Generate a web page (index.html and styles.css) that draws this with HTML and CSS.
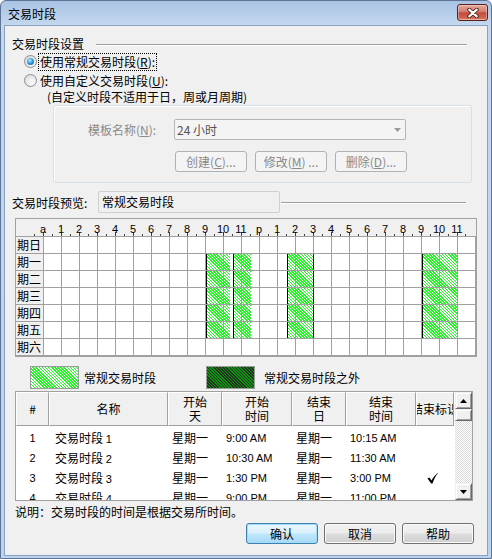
FILE: index.html
```html
<!DOCTYPE html>
<html lang="zh-CN">
<head>
<meta charset="utf-8">
<title>交易时段</title>
<link rel="stylesheet" href="styles.css">
</head>
<body>
<div class="window">
  <div class="titlebar">
    <span class="title">交易时段</span>
    <span class="close"><svg width="12" height="10" viewBox="0 0 12 10"><path d="M2.2 1.6L9.8 8.4M9.8 1.6L2.2 8.4" stroke="#4b1912" stroke-width="3.8" stroke-linecap="round" fill="none"/><path d="M2.2 1.6L9.8 8.4M9.8 1.6L2.2 8.4" stroke="#fff" stroke-width="2.1" stroke-linecap="round" fill="none"/></svg></span>
  </div>
  <div class="client">
    <div class="sect-head"><span>交易时段设置</span><i class="rule"></i></div>
    <div class="opt"><span class="radio on"></span><span class="opt-label focus">使用常规交易时段(<u>R</u>):</span></div>
    <div class="opt"><span class="radio"></span><span class="opt-label">使用自定义交易时段(<u>U</u>):</span></div>
    <div class="note">(自定义时段不适用于日，周或月周期)</div>
    <div class="groupbox">
      <div class="gb-row">
        <span class="gb-label">模板名称(<u>N</u>):</span>
        <div class="combo"><span>24 小时</span><svg width="7" height="4" viewBox="0 0 7 4"><path d="M0 0H7L3.5 4Z" fill="#9a9a9a"/></svg></div>
      </div>
      <div class="gb-btns">
        <button class="btn-dis">创建(<u>C</u>)...</button>
        <button class="btn-dis">修改(<u>M</u>) ...</button>
        <button class="btn-dis">删除(<u>D</u>)...</button>
      </div>
    </div>
    <div class="prev">
      <span class="prev-label">交易时段预览:</span>
      <div class="tb">常规交易时段</div>
      <i class="rule"></i>
    </div>
    <div class="chart">
      <div class="hours"><span>a</span><span>1</span><span>2</span><span>3</span><span>4</span><span>5</span><span>6</span><span>7</span><span>8</span><span>9</span><span>10</span><span>11</span><span>p</span><span>1</span><span>2</span><span>3</span><span>4</span><span>5</span><span>6</span><span>7</span><span>8</span><span>9</span><span>10</span><span>11</span></div>
      <div class="drow"><span class="day">期日</span><i></i><i></i><i></i><i></i><i></i><i></i><i></i><i></i><i></i><i></i><i></i><i></i><i></i><i></i><i></i><i></i><i></i><i></i><i></i><i></i><i></i><i></i><i></i><i></i></div>
      <div class="drow"><span class="day">期一</span><i></i><i></i><i></i><i></i><i></i><i></i><i></i><i></i><i></i><i></i><i></i><i></i><i></i><i></i><i></i><i></i><i></i><i></i><i></i><i></i><i></i><i></i><i></i><i></i><b class="sess" style="left:190px;width:24px"></b><b class="sess" style="left:217px;width:18px"></b><b class="sess" style="left:271px;width:26px"></b><b class="edge" style="left:297px"></b><b class="sess" style="left:406px;width:35px"></b></div>
      <div class="drow"><span class="day">期二</span><i></i><i></i><i></i><i></i><i></i><i></i><i></i><i></i><i></i><i></i><i></i><i></i><i></i><i></i><i></i><i></i><i></i><i></i><i></i><i></i><i></i><i></i><i></i><i></i><b class="sess" style="left:190px;width:24px"></b><b class="sess" style="left:217px;width:18px"></b><b class="sess" style="left:271px;width:26px"></b><b class="edge" style="left:297px"></b><b class="sess" style="left:406px;width:35px"></b></div>
      <div class="drow"><span class="day">期三</span><i></i><i></i><i></i><i></i><i></i><i></i><i></i><i></i><i></i><i></i><i></i><i></i><i></i><i></i><i></i><i></i><i></i><i></i><i></i><i></i><i></i><i></i><i></i><i></i><b class="sess" style="left:190px;width:24px"></b><b class="sess" style="left:217px;width:18px"></b><b class="sess" style="left:271px;width:26px"></b><b class="edge" style="left:297px"></b><b class="sess" style="left:406px;width:35px"></b></div>
      <div class="drow"><span class="day">期四</span><i></i><i></i><i></i><i></i><i></i><i></i><i></i><i></i><i></i><i></i><i></i><i></i><i></i><i></i><i></i><i></i><i></i><i></i><i></i><i></i><i></i><i></i><i></i><i></i><b class="sess" style="left:190px;width:24px"></b><b class="sess" style="left:217px;width:18px"></b><b class="sess" style="left:271px;width:26px"></b><b class="edge" style="left:297px"></b><b class="sess" style="left:406px;width:35px"></b></div>
      <div class="drow"><span class="day">期五</span><i></i><i></i><i></i><i></i><i></i><i></i><i></i><i></i><i></i><i></i><i></i><i></i><i></i><i></i><i></i><i></i><i></i><i></i><i></i><i></i><i></i><i></i><i></i><i></i><b class="sess" style="left:190px;width:24px"></b><b class="sess" style="left:217px;width:18px"></b><b class="sess" style="left:271px;width:26px"></b><b class="edge" style="left:297px"></b><b class="sess" style="left:406px;width:35px"></b></div>
      <div class="drow last"><span class="day">期六</span><i></i><i></i><i></i><i></i><i></i><i></i><i></i><i></i><i></i><i></i><i></i><i></i><i></i><i></i><i></i><i></i><i></i><i></i><i></i><i></i><i></i><i></i><i></i><i></i></div>
    </div>
    <div class="legend">
      <span class="swatch hatch"></span><span class="lg1">常规交易时段</span>
      <span class="swatch hatch-dark"></span><span class="lg2">常规交易时段之外</span>
    </div>
    <div class="list">
      <div class="list-main">
        <div class="lhead">
          <div class="c1">#</div>
          <div class="c2">名称</div>
          <div class="c3">开始<br>天</div>
          <div class="c4">开始<br>时间</div>
          <div class="c5">结束<br>日</div>
          <div class="c6">结束<br>时间</div>
          <div class="c7">结束标识</div>
        </div>
        <div class="lrows">
          <div class="lr"><div class="c1 t">1</div><div class="c2">交易时段 <span class="t">1</span></div><div class="c3">星期一</div><div class="c4 t">9:00 AM</div><div class="c5">星期一</div><div class="c6 t">10:15 AM</div><div class="c7"></div></div>
          <div class="lr"><div class="c1 t">2</div><div class="c2">交易时段 <span class="t">2</span></div><div class="c3">星期一</div><div class="c4 t">10:30 AM</div><div class="c5">星期一</div><div class="c6 t">11:30 AM</div><div class="c7"></div></div>
          <div class="lr"><div class="c1 t">3</div><div class="c2">交易时段 <span class="t">3</span></div><div class="c3">星期一</div><div class="c4 t">1:30 PM</div><div class="c5">星期一</div><div class="c6 t">3:00 PM</div><div class="c7"><svg width="12" height="12" viewBox="0 0 12 12"><path d="M0.5 6.6L2.4 5.6L4.5 8.4C6.4 5 8.6 2.4 11.6 0.4C8.9 3.4 6.9 7 5.5 11.6H4.2Z" fill="#000"/></svg></div></div>
          <div class="lr"><div class="c1 t">4</div><div class="c2">交易时段 <span class="t">4</span></div><div class="c3">星期一</div><div class="c4 t">9:00 PM</div><div class="c5">星期一</div><div class="c6 t">11:00 PM</div><div class="c7"></div></div>
        </div>
      </div>
      <div class="vscroll">
        <div class="sb-btn"><svg width="7" height="4" viewBox="0 0 7 4"><path d="M3.5 0L7 4H0Z" fill="#000"/></svg></div>
        <div class="sb-thumb"></div>
        <div class="sb-track"></div>
        <div class="sb-btn"><svg width="7" height="4" viewBox="0 0 7 4"><path d="M0 0H7L3.5 4Z" fill="#000"/></svg></div>
      </div>
    </div>
    <div class="foot">说明：交易时段的时间是根据交易所时间。</div>
    <div class="actions">
      <button class="btn default">确认</button>
      <button class="btn">取消</button>
      <button class="btn">帮助</button>
    </div>
  </div>
</div>
</body>
</html>
```

FILE: styles.css
```css
* { box-sizing: border-box; }
html, body { margin: 0; padding: 0; background: #fff; }
body {
  width: 492px; height: 559px; overflow: hidden;
  font-family: "Noto Sans CJK SC", sans-serif;
  font-size: 12px; color: #000;
}
u { text-decoration: underline; text-underline-offset: 1px; }

.window {
  width: 492px; height: 559px;
  border: 1px solid #5f7494;
  border-radius: 6px 6px 0 0;
  background: linear-gradient(#a9c3e4, #c3d7ef 24px, #bcd3ed);
  padding: 0 3px 2px 3px;
  display: flex; flex-direction: column;
}
.titlebar { height: 24px; display: flex; align-items: flex-start; padding-left: 4px; }
.title { line-height: 16px; margin-top: 5px; color: #000; }
.close {
  margin-left: auto; margin-top: 3px;
  width: 31px; height: 17px;
  border: 1px solid #5a1f18; border-radius: 3px;
  background: linear-gradient(#e6aa9c, #d27c6c 45%, #c24a3c 52%, #cf6450 85%, #dc8a72);
  box-shadow: inset 0 0 0 1px rgba(255,255,255,.35);
  display: flex; align-items: center; justify-content: center;
}

.client {
  flex: 1; background: #f0f0f0;
  border: 1px solid #8aa2c2;
  display: flex; flex-direction: column;
}

.rule { flex: 1; height: 1px; background: #a0a0a0; box-shadow: 0 1px #fff; }
.sect-head { display: flex; align-items: center; gap: 12px; height: 16px; line-height: 16px; margin: 10px 20px 0 7px; }

.opt { display: flex; align-items: center; height: 19px; margin-left: 19px; }
.radio {
  width: 13px; height: 13px; border-radius: 50%;
  border: 1px solid #8c8e8f;
  background: radial-gradient(circle at 65% 70%, #fbfbfb 0, #e6e6e6 60%, #cfcfcf 100%);
  display: flex; align-items: center; justify-content: center;
  margin-right: 2px; flex: none;
}
.radio.on::after {
  content: ""; width: 7px; height: 7px; border-radius: 50%;
  background: radial-gradient(circle at 40% 35%, #b8ecff 0, #3a9ee0 45%, #0d4a8c 100%);
}
.opt-label { line-height: 16px; padding: 0 1px; }
.focus { outline: 1px dotted #000; outline-offset: 0; }
.note { margin-left: 42px; line-height: 14px; height: 14px; }

.groupbox {
  margin: 1px 0 0 48px; width: 419px; height: 78px;
  border: 1px solid #d5dfe5; border-radius: 3px;
  box-shadow: inset 1px 1px #fff;
  padding: 13px 0 0 34px;
}
.gb-row { display: flex; align-items: center; height: 21px; }
.gb-label { width: 86px; color: #8a8a8a; }
.combo {
  width: 232px; height: 21px;
  border: 1px solid #b5b5b5; border-radius: 2px;
  background: #f4f4f4; color: #555;
  display: flex; align-items: center; justify-content: space-between;
  padding: 0 4px 0 2px; line-height: 19px;
}
.gb-btns { display: flex; gap: 8px; margin: 11px 0 0 87px; }
.btn-dis {
  width: 72px; height: 21px; padding: 0;
  border: 1px solid #adb2b5; border-radius: 3px;
  background: #f4f4f4; color: #8a8a8a;
  font: inherit; line-height: 19px;
}

.prev { display: flex; align-items: center; height: 22px; margin: 8px 21px 0 7px; }
.prev-label { width: 86px; flex: none; }
.tb {
  width: 182px; height: 22px; flex: none;
  border: 1px solid #d0d0d0; border-radius: 2px;
  background: #f0f0f0; padding-left: 3px; line-height: 20px;
}
.prev .rule { margin-left: 1px; }

.chart { margin: 5px 0 0 10px; width: 462px; border: 1px solid #a0a0a0; background: #fff; }
.hours { display: flex; height: 17px; background: #f0f0f0; padding-left: 18px; }
.hours span {
  width: 18px; flex: none; text-align: center;
  font: 11px/12px "Liberation Sans", sans-serif; padding-top: 4px;
  background-image: linear-gradient(#404040, #404040), linear-gradient(#404040, #404040);
  background-size: 1px 4px, 1px 2px;
  background-position: 9px 100%, 0 100%;
  background-repeat: no-repeat;
}
.hours span:last-child {
  background-image: linear-gradient(#404040, #404040), linear-gradient(#404040, #404040), linear-gradient(#404040, #404040);
  background-size: 1px 4px, 1px 2px, 1px 2px;
  background-position: 9px 100%, 0 100%, 100% 100%;
}
.drow { display: flex; height: 17px; position: relative; z-index: 0; background: #fff; }
.drow.last { height: 18px; }
.day {
  width: 27px; flex: none; background: #f0f0f0;
  border-top: 1px solid #a0a0a0;
  text-align: right; padding-right: 2px;
  line-height: 16px; white-space: nowrap; overflow: hidden;
}
.drow i { width: 18px; flex: none; border-top: 1px solid #a0a0a0; border-left: 1px solid #a0a0a0; }
.drow i:last-of-type { width: 19px; border-right: 1px solid #a0a0a0; }
.drow.last .day, .drow.last i { border-bottom: 1px solid #a0a0a0; }

.hatch { background: repeating-linear-gradient(45deg, #22f522 0 1.1px, #ffffff 1.1px 2.2px); }
.hatch-dark { background: repeating-linear-gradient(45deg, #0f8f0f 0 1.1px, #223322 1.1px 2.2px); }
.sess {
  position: absolute; top: 0; bottom: 0; z-index: -1;
  border-left: 1px solid #000;
  background: repeating-linear-gradient(45deg, #22f522 0 1.1px, #ffffff 1.1px 2.2px);
}
.edge { position: absolute; top: 1px; bottom: 0; width: 1px; background: #0000e0; z-index: 1; }

.legend { display: flex; align-items: center; height: 23px; margin: 9px 0 0 25px; }
.swatch { width: 49px; height: 23px; border: 1px solid #9a9a9a; flex: none; }
.lg1 { width: 122px; margin-left: 5px; }
.lg2 { margin-left: 9px; }

.list {
  display: flex; margin: 2px 0 0 10px;
  width: 458px; height: 110px;
  border: 1px solid #a0a0a0; background: #fff;
}
.list-main { width: 438px; overflow: hidden; flex: none; }
.lhead { display: flex; height: 34px; }
.lhead > div {
  border-style: solid; border-width: 1px;
  border-color: #fff #a0a0a0 #a0a0a0 #fff;
  background: #f0f0f0;
  display: flex; align-items: center; justify-content: center;
  text-align: center; line-height: 14px;
  white-space: nowrap; overflow: hidden;
}
.c1 { width: 33px; flex: none; }
.c2 { width: 119px; flex: none; }
.c3 { width: 54px; flex: none; }
.c4 { width: 70px; flex: none; }
.c5 { width: 54px; flex: none; }
.c6 { width: 70px; flex: none; }
.c7 { width: 38px; flex: none; }
.lrows { padding-top: 2px; }
.lr { display: flex; height: 20px; align-items: center; line-height: 16px; white-space: nowrap; }
.lr .c1 { text-align: center; }
.lr .c2 { padding-left: 6px; }
.lr .c3, .lr .c4, .lr .c5, .lr .c6 { padding-left: 4px; }
.lr .c7 { display: flex; justify-content: center; padding-right: 4px; }
.t { font-family: "Liberation Sans", sans-serif; font-size: 11px; }

.vscroll { width: 17px; margin-left: 1px; display: flex; flex-direction: column; flex: none; }
.sb-btn, .sb-thumb {
  background: #f0f0f0;
  border: 1px solid; border-color: #f0f0f0 #696969 #696969 #f0f0f0;
  box-shadow: inset 1px 1px #fff, inset -1px -1px #a0a0a0;
}
.sb-btn { height: 17px; display: flex; align-items: center; justify-content: center; }
.sb-thumb { height: 12px; }
.sb-track { flex: 1; background: repeating-conic-gradient(#fff 0 25%, #dadada 0 50%) 0 0 / 2px 2px; }

.foot { margin: 4px 0 0 10px; line-height: 14px; }
.actions { display: flex; justify-content: flex-end; gap: 6px; margin: 4px 13px 0 0; }
.btn {
  width: 72px; height: 21px; padding: 0;
  border: 1px solid #707070; border-radius: 3px;
  background: linear-gradient(#f2f2f2 0, #ebebeb 48%, #dddddd 52%, #cfcfcf 100%);
  box-shadow: inset 0 0 0 1px #fbfbfb;
  font: inherit; line-height: 19px; color: #000;
}
.btn.default {
  border-color: #3c7fb1;
  box-shadow: inset 0 0 0 1px #9fdcf7;
  background: linear-gradient(#eaf6fd 0, #d9f0fc 48%, #bee6fd 52%, #a7d9f5 100%);
}
```
